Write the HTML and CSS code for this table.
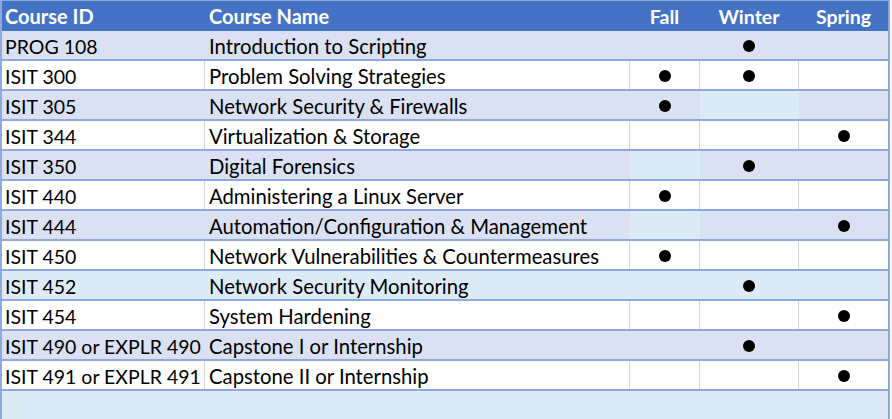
FILE: index.html
```html
<!DOCTYPE html>
<html>
<head>
<meta charset="utf-8">
<link rel="stylesheet" href="styles.css">
</head>
<body>
<div class="sheet">
  <div class="row head">
    <div class="c id">Course ID</div>
    <div class="c name">Course Name</div>
    <div class="c term">Fall</div>
    <div class="c term">Winter</div>
    <div class="c term">Spring</div>
  </div>
  <div class="row band">
    <div class="c id">PROG 108</div>
    <div class="c name">Introduction to Scripting</div>
    <div class="c term"></div>
    <div class="c term"><span class="dot">●</span></div>
    <div class="c term"></div>
  </div>
  <div class="row">
    <div class="c id">ISIT 300</div>
    <div class="c name">Problem Solving Strategies</div>
    <div class="c term"><span class="dot">●</span></div>
    <div class="c term"><span class="dot">●</span></div>
    <div class="c term"></div>
  </div>
  <div class="row band">
    <div class="c id">ISIT 305</div>
    <div class="c name">Network Security &amp; Firewalls</div>
    <div class="c term"><span class="dot">●</span></div>
    <div class="c term light"></div>
    <div class="c term"></div>
  </div>
  <div class="row">
    <div class="c id">ISIT 344</div>
    <div class="c name">Virtualization &amp; Storage</div>
    <div class="c term"></div>
    <div class="c term"></div>
    <div class="c term"><span class="dot">●</span></div>
  </div>
  <div class="row band">
    <div class="c id">ISIT 350</div>
    <div class="c name">Digital Forensics</div>
    <div class="c term light"></div>
    <div class="c term"><span class="dot">●</span></div>
    <div class="c term"></div>
  </div>
  <div class="row">
    <div class="c id">ISIT 440</div>
    <div class="c name">Administering a Linux Server</div>
    <div class="c term"><span class="dot">●</span></div>
    <div class="c term"></div>
    <div class="c term"></div>
  </div>
  <div class="row band">
    <div class="c id">ISIT 444</div>
    <div class="c name">Automation/Configuration &amp; Management</div>
    <div class="c term light"></div>
    <div class="c term"></div>
    <div class="c term"><span class="dot">●</span></div>
  </div>
  <div class="row">
    <div class="c id">ISIT 450</div>
    <div class="c name">Network Vulnerabilities &amp; Countermeasures</div>
    <div class="c term"><span class="dot">●</span></div>
    <div class="c term"></div>
    <div class="c term"></div>
  </div>
  <div class="row band lightrow">
    <div class="c id">ISIT 452</div>
    <div class="c name">Network Security Monitoring</div>
    <div class="c term"></div>
    <div class="c term"><span class="dot">●</span></div>
    <div class="c term"></div>
  </div>
  <div class="row">
    <div class="c id">ISIT 454</div>
    <div class="c name">System Hardening</div>
    <div class="c term"></div>
    <div class="c term"></div>
    <div class="c term"><span class="dot">●</span></div>
  </div>
  <div class="row band">
    <div class="c id">ISIT 490 or EXPLR 490</div>
    <div class="c name">Capstone I or Internship</div>
    <div class="c term"></div>
    <div class="c term"><span class="dot">●</span></div>
    <div class="c term"></div>
  </div>
  <div class="row">
    <div class="c id">ISIT 491 or EXPLR 491</div>
    <div class="c name">Capstone II or Internship</div>
    <div class="c term"></div>
    <div class="c term"></div>
    <div class="c term"><span class="dot">●</span></div>
  </div>
  <div class="row empty"></div>
</div>
</body>
</html>
```
FILE: styles.css
```css
html, body {
  margin: 0;
  padding: 0;
  background: #ffffff;
}

.sheet {
  width: 890px;
  font-family: "Lato", "Open Sans", sans-serif;
  font-size: 19.5px;
  color: #000;
}

.row {
  display: grid;
  grid-template-columns: 203px 425px 70px 99px 89px;
  height: 30px;
  box-sizing: border-box;
  border-left: 2px solid #8ea9db;
  border-right: 2px solid #8ea9db;
  border-bottom: 2px solid #8ea9db;
  background: #ffffff;
}

.c {
  display: flex;
  align-items: center;
  box-sizing: border-box;
  border-right: 1px solid #d4d4d4;
  white-space: nowrap;
  overflow: hidden;
  padding-top: 2px;
}

.c.id { padding-left: 3px; }
.c.name { padding-left: 4px; font-size: 20.3px; }
.c.term { justify-content: center; }
.c:last-child { border-right: none; }

.row.head {
  height: 31px;
  background: #4472c4;
  border-top: 1px solid #8ea9db;
  border-bottom: none;
  color: #ffffff;
  font-weight: 700;
}
.row.head .c { border-right-color: transparent; padding-top: 0; }
.row.head .c.id,
.row.head .c.name {
  font-size: 20px;
}
.row.head .c.term { font-size: 19.5px; }

.row.band { background: #d9e1f2; }
.row.band .c { border-right-color: transparent; }

.row.lightrow,
.c.light { background: #ddebf7; }

.row.empty {
  display: block;
  height: 28px;
  border-bottom: none;
  background: #ddebf7;
}

.dot {
  display: inline-block;
  width: 12px;
  height: 12px;
  border-radius: 50%;
  background: #000;
  color: transparent;
  font-size: 1px;
  overflow: hidden;
}
```
